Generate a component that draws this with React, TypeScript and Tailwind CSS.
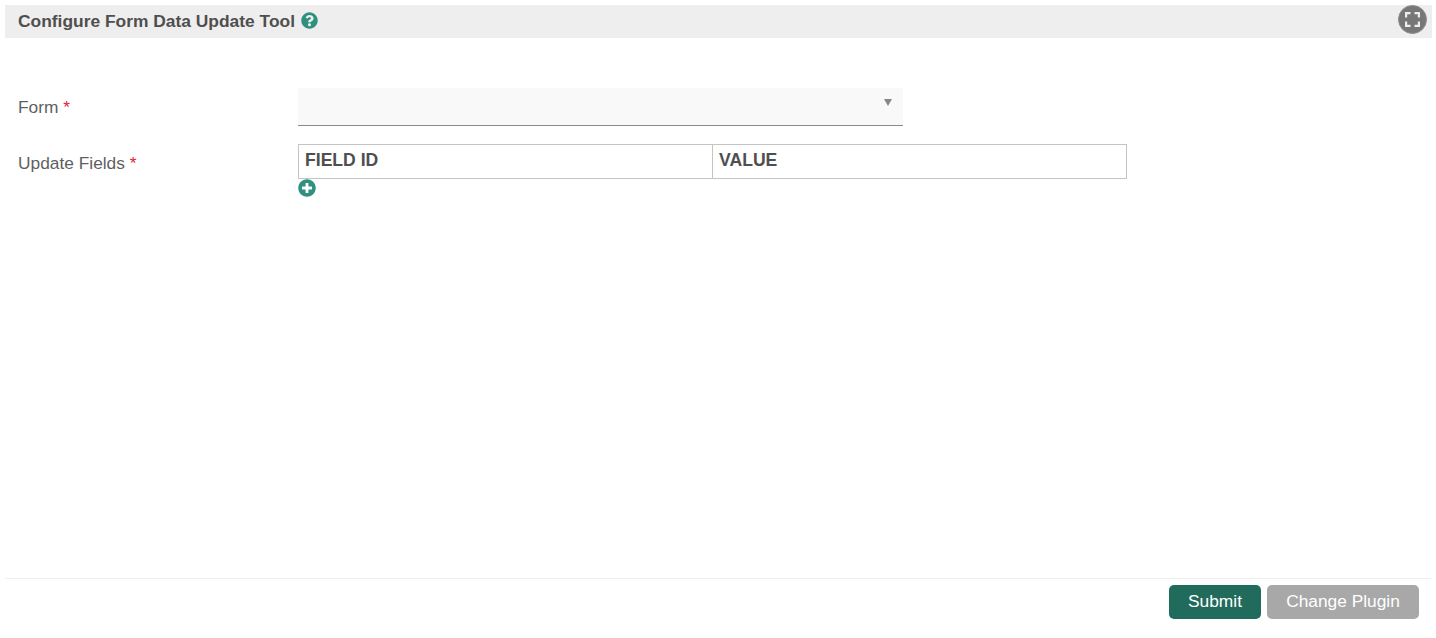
// App.tsx
import React from "react";
import { FaPlusCircle, FaQuestionCircle } from "react-icons/fa";

const Required = () => <span className="text-[#e0203a]">*</span>;

const App = () => {
  return (
    <div className="h-[638px] w-[1436px] flex flex-col bg-white pt-[5px] px-[5px] text-[#555] font-['Liberation_Sans',Arial,sans-serif] overflow-hidden">
      <div className="h-[33px] mr-[-1px] bg-[#eeeeee] flex items-center justify-between pl-[13px] pr-[5px] shrink-0">
        <div className="flex items-center gap-[6px] text-[17.4px] font-bold text-[#4f4f4f] leading-[24px] mt-[-2px]">
          <span>Configure Form Data Update Tool</span>
          <FaQuestionCircle className="text-[#2f9080] w-[17px] h-[17px]" />
        </div>
        <button className="w-[29px] h-[29px] mt-[-4px] rounded-full bg-[#777777] border border-[#8f8f8f] flex items-center justify-center">
          <svg width="15" height="15" viewBox="0 0 15 15" fill="none" stroke="#eeeeee" strokeWidth="2.2">
            <path d="M1.1 5.5V1.1H5.5M9.5 1.1H13.9V5.5M13.9 9.5V13.9H9.5M5.5 13.9H1.1V9.5" />
          </svg>
        </button>
      </div>

      <div className="flex-1 pl-[13px] pt-[50px]">
        <div className="flex">
          <label className="w-[280px] text-[17.33px] text-[#5f5f5f] pt-[7px] leading-[24px]">
            Form <Required />
          </label>
          <div className="relative w-[605px] h-[38px] bg-[#f9f9f9] border-b border-[#8a8a8a]">
            <span className="absolute right-[11px] top-[11px] w-0 h-0 border-x-[4px] border-x-transparent border-t-[7px] border-t-[#888]" />
          </div>
        </div>

        <div className="flex mt-[18px]">
          <label className="w-[280px] text-[17.33px] text-[#5f5f5f] pt-[7px] leading-[24px]">
            Update Fields <Required />
          </label>
          <div className="w-[829px]">
            <div className="flex h-[35px] border border-[#c4c4c4] text-[17.6px] font-bold text-[#4f4f4f] leading-[31px]">
              <div className="w-[414px] pl-[6px] border-r border-[#c4c4c4]">FIELD ID</div>
              <div className="flex-1 pl-[6px]">VALUE</div>
            </div>
            <FaPlusCircle className="text-[#2f9080] w-[18px] h-[18px]" />
          </div>
        </div>
      </div>

      <div className="h-[60px] shrink-0 border-t border-[#eeeeee] flex justify-end gap-[6px] pt-[6px] pr-[12px] text-[17.33px] text-white">
        <button className="w-[92px] h-[34px] rounded-[5px] bg-[#216b5c]">Submit</button>
        <button className="w-[152px] h-[34px] rounded-[5px] bg-[#a8a8a8]">Change Plugin</button>
      </div>
    </div>
  );
};

export default App;
